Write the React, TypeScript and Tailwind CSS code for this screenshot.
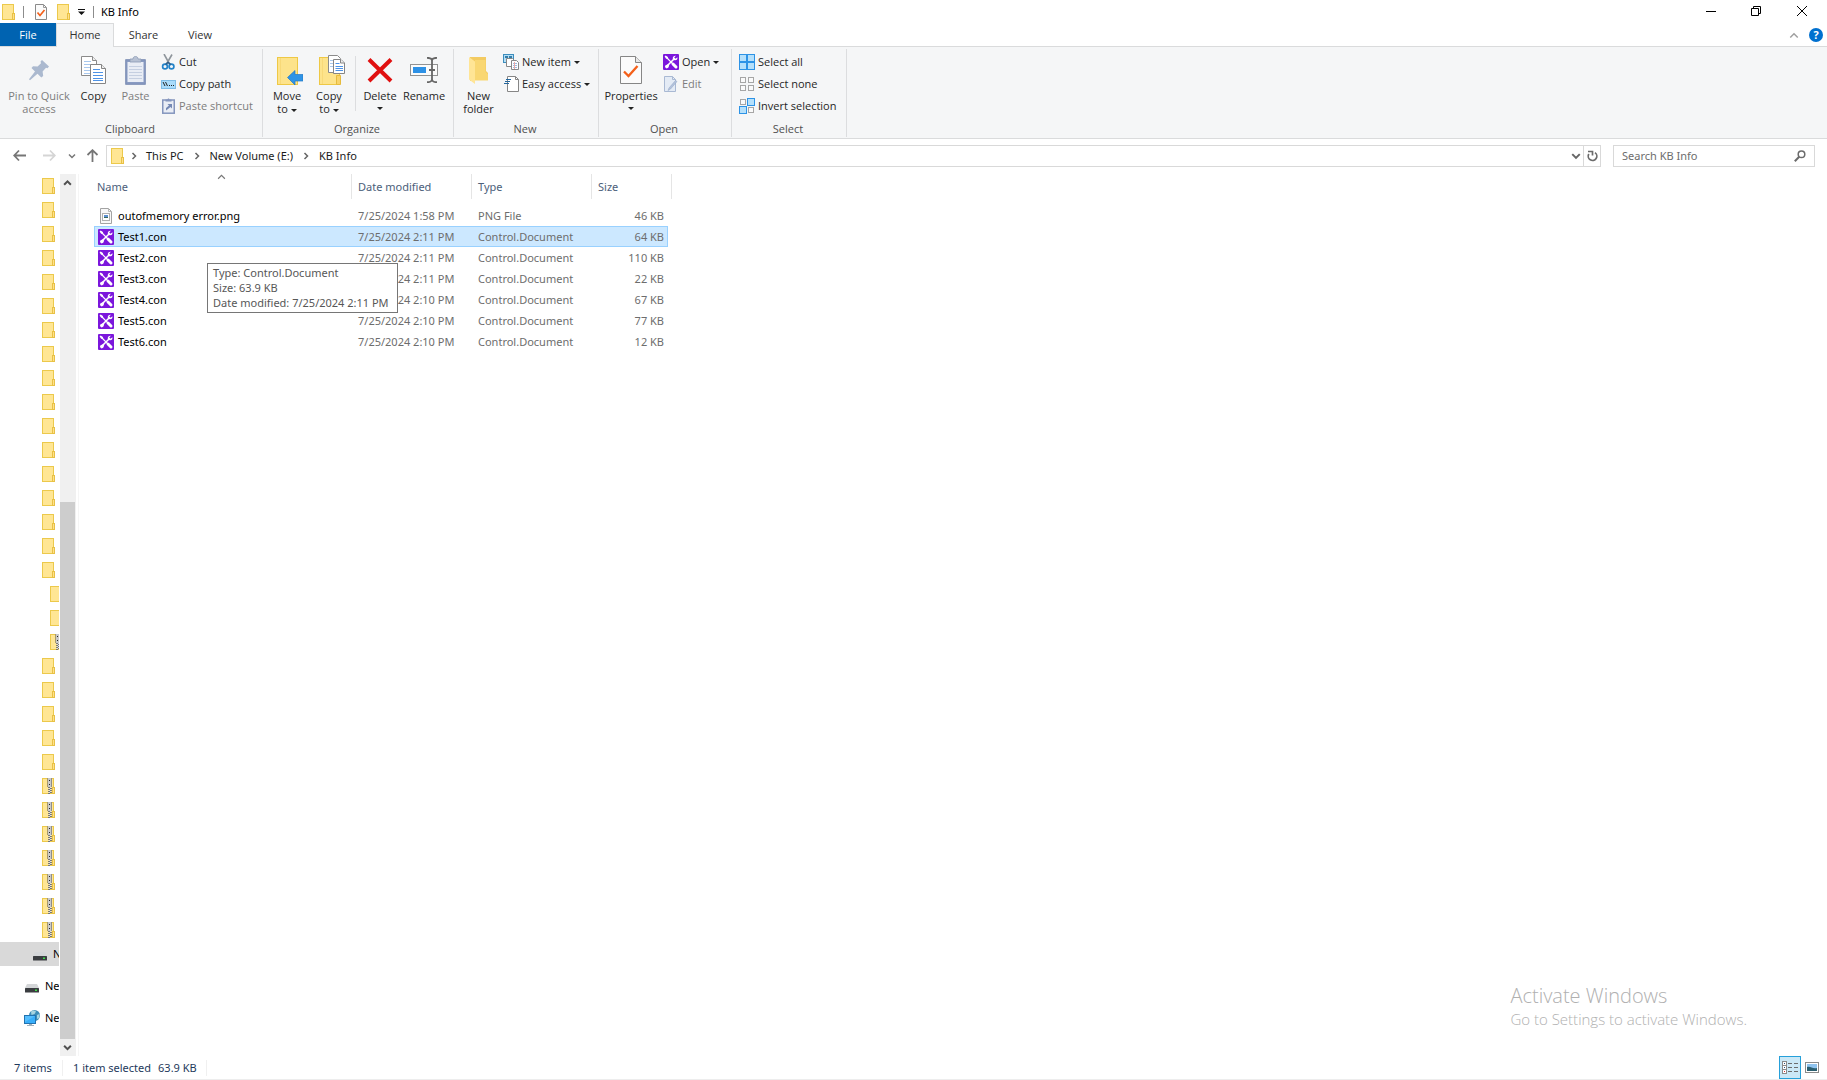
import type { ReactNode } from "react";

/* ---------- icons ---------- */

function FolderIcon({ zip = false }: { zip?: boolean }) {
  return (
    <svg width="13" height="16" viewBox="0 0 13 16" className="block shrink-0" shapeRendering="crispEdges">
      <rect x="0.5" y="0.5" width="11" height="15" fill="#ffe694" stroke="#ecc94b" />
      <rect x="10.5" y="9.5" width="2" height="6" fill="#ffe08a" stroke="#e8c145" />
      {zip && (
        <g>
          <rect x="5" y="0" width="5" height="9" fill="#c9c9c9" />
          <rect x="5" y="0" width="1" height="9" fill="#a89a6a" />
          <rect x="9" y="0" width="1" height="9" fill="#8d8d8d" />
          <rect x="7" y="2" width="1" height="1" fill="#222" />
          <rect x="7" y="6" width="1" height="1" fill="#222" />
          <path d="M6 9h2v1H6zM8 10h2v1H8zM6 11h2v1H6zM8 12h2v1H8zM6 13h2v1H6zM8 14h2v1H8zM6 15h2v1H6z" fill="#777" />
          <path d="M8 9h1v1H8zM7 10h1v1H7zM8 11h1v1H8zM7 12h1v1H7zM8 13h1v1H8zM7 14h1v1H7z" fill="#ddd" />
        </g>
      )}
    </svg>
  );
}

function ToolsIcon() {
  return (
    <svg width="16" height="16" viewBox="0 0 16 16" className="block shrink-0">
      <rect width="16" height="16" rx="1" fill="#7b16dc" />
      <path d="m4 4 5.500 5.500" stroke="#fff" strokeWidth="1.100" />
      <path d="m1.600 2.500 1-1 2.300 1.400.3 2.200-2.100-.3z" fill="#fff" />
      <path d="m10 10 3 3" stroke="#fff" strokeWidth="3" strokeLinecap="round" />
      <path d="m4 12 7-7" stroke="#fff" strokeWidth="1.600" />
      <path d="M12.900 1.700 11.200 3.400l1.400 1.400 1.800-1.600c.4 1.800-.7 3.200-2.500 3.100-1.500-.1-2.400-1.300-2.100-2.600.3-1.400 1.600-2.300 3.100-2z" fill="#fff" />
      <path d="m2.500 11.200 2.500-1 1.200 1.200-1 2.300-1.700.9-1.600-1.500z" fill="#fff" />
    </svg>
  );
}

function CheckPageIcon({ large = false }: { large?: boolean }) {
  return large ? (
    <svg width="22" height="28" viewBox="0 0 22 28" className="block">
      <path d="M.5.5h15l6 6v21H.5z" fill="#fbfbfb" stroke="#868686" />
      <path d="M15.5.5v6h6" fill="#e8e8e8" stroke="#868686" />
      <path d="m4 15.500 4.500 4.500 9-10" fill="none" stroke="#f4601a" strokeWidth="2.300" />
    </svg>
  ) : (
    <svg width="12" height="16" viewBox="0 0 12 16" className="block">
      <path d="M.5.5h8l3 3v12H.5z" fill="#fbfbfb" stroke="#8a8a8a" />
      <path d="M8.500.5v3h3" fill="none" stroke="#9a9a9a" />
      <path d="m2.500 8.500 2.500 3 4.500-5.500" fill="none" stroke="#f4601a" strokeWidth="1.700" />
    </svg>
  );
}

function PinIcon() {
  return (
    <svg width="22" height="22" viewBox="0 0 22 22" className="block">
      <path d="M14 1 21 7.500 19.500 9.200 18 8.700 14.600 12.500 15.200 17 13.300 18.600 9.500 14.800 2 21.200 1 20.300 7 12.500 3.500 9 5 7.200 9.600 7.600 13 4.200 12.500 2.500z" fill="#abb9cf" />
    </svg>
  );
}

function CopyIcon() {
  return (
    <svg width="25" height="28" viewBox="0 0 25 28" className="block">
      <path d="M.5.5h11l4 4v15H.5z" fill="#fff" stroke="#8b8b8b" />
      <path d="M11.500.5v4h4" fill="#eee" stroke="#8b8b8b" />
      <path d="M3 5.500h7M3 8.500h10M3 11.500h10M3 14.500h10M3 17.500h10" stroke="#a8c8ee" />
      <path d="M9.500 8.500h11l4 4v15h-15z" fill="#fff" stroke="#858585" />
      <path d="M20.500 8.500v4h4" fill="#eee" stroke="#858585" />
      <path d="M12 13.500h7M12 16.500h10M12 19.500h10M12 22.500h10M12 24.500h10" stroke="#4e93e6" />
    </svg>
  );
}

function PasteIcon() {
  return (
    <svg width="21" height="29" viewBox="0 0 21 29" className="block">
      <rect x=".75" y="3.750" width="19.500" height="24.500" fill="#899bc2" stroke="#7688b0" />
      <rect x="2.500" y="6" width="16" height="20" fill="#e9edf5" />
      <path d="M4 10.500h13M4 13.500h13M4 16.500h13M4 19.500h13M4 22.500h13" stroke="#c5cfe1" />
      <path d="M5 6V3h3c0-3.500 5-3.500 5 0h3v3z" fill="#b7c1d3" stroke="#8a99b5" strokeWidth=".8" />
    </svg>
  );
}

function CutIcon() {
  return (
    <svg width="14" height="16" viewBox="0 0 14 16" className="block">
      <path d="m3 0 5.500 10M11 .5 5.500 10" stroke="#8f969c" strokeWidth="1.600" />
      <circle cx="4" cy="12.500" r="2.400" fill="none" stroke="#2383c9" strokeWidth="1.700" />
      <circle cx="10.500" cy="12.500" r="2.400" fill="none" stroke="#2383c9" strokeWidth="1.700" />
      <path d="m4.500 10.500 2.500-2 3 2" fill="none" stroke="#2a5e8c" strokeWidth="1.500" />
    </svg>
  );
}

function CopyPathIcon() {
  return (
    <svg width="15" height="9" viewBox="0 0 15 9" className="block">
      <rect x=".5" y=".5" width="14" height="8" fill="#a9dcfb" stroke="#7fbde6" />
      <path d="m2 2 2 4M4.500 2l2 4" stroke="#222" />
      <path d="M8 5h1v1H8zM10 5h1v1h-1zM12 5h1v1h-1z" fill="#222" />
    </svg>
  );
}

function PasteShortcutIcon() {
  return (
    <svg width="13" height="16" viewBox="0 0 13 16" className="block">
      <rect x=".75" y="2" width="11.500" height="13.200" fill="#e9edf5" stroke="#8495bd" strokeWidth="1.500" />
      <path d="M3.500 3.500v-2h2c0-1.500 2-1.500 2 0h2v2z" fill="#8495bd" />
      <path d="M4 12.500V10l3-2.500L5.500 6H10v4.500L8.500 9 6 11z" fill="#7589b5" />
    </svg>
  );
}

function RibbonFolder({ children }: { children?: ReactNode }) {
  return (
    <svg width="32" height="30" viewBox="-5 0 32 30" className="block shrink-0">
      <rect x="1.500" y="2.500" width="20" height="27" fill="#fde38b" stroke="#eec845" />
      <path d="M4.500 3v26" stroke="#f8d978" />
      {children}
    </svg>
  );
}

function MoveToIcon() {
  return (
    <RibbonFolder>
      <path d="m11.500 22.500 7.500-7v4h8v6.500h-8v4z" fill="#2f94e6" stroke="#2379c4" strokeWidth=".7" />
    </RibbonFolder>
  );
}

function CopyToIcon() {
  return (
    <RibbonFolder>
      <path d="M18.500 20.500h4v9h-4z" fill="#f8d36a" stroke="#e6bb3d" />
      <path d="M10.500.5h9l3 3v14h-12z" fill="#fff" stroke="#8b8b8b" />
      <path d="M12 5.500h7M12 8.500h7M12 11.500h5" stroke="#a8c8ee" />
      <path d="M15.500 4.500h7.500l3.500 3.500v10.500H15.500z" fill="#fff" stroke="#858585" />
      <path d="M22.500 4.500v3.500h4" fill="#eee" stroke="#858585" />
      <path d="M17.500 8.500h4M17.500 11.500h7.500M17.500 13.500h7.500M17.500 15.500h7.500" stroke="#4e93e6" />
    </RibbonFolder>
  );
}

function DeleteIcon() {
  return (
    <svg width="26" height="26" viewBox="0 0 26 26" className="block">
      <path d="M2 2.500 24 24M24 2.500 2 24" stroke="#e01010" strokeWidth="4" />
    </svg>
  );
}

function RenameIcon() {
  return (
    <svg width="28" height="26" viewBox="0 0 28 26" className="block">
      <rect x=".5" y="7.500" width="27" height="11" fill="#fbfbfb" stroke="#929292" />
      <rect x="3" y="10" width="13" height="6" fill="#2d91e6" />
      <path d="M17 .8c3 0 4.800.7 5 2.700v19c-.2 2-2 2.700-5 2.700M27 .8c-3 0-4.800.7-5 2.700M22 22.500c.2 2 2 2.700 5 2.700M19 13h6" fill="none" stroke="#666" strokeWidth="1.800" />
    </svg>
  );
}

function NewFolderIcon() {
  return (
    <svg width="20" height="27" viewBox="0 0 20 27" className="block">
      <path d="M1 0h16v14l2 2v7H6L1 24z" fill="#f3cb62" />
      <path d="M6 3h10.500v12l2.500 2v6.500H6z" fill="#f9d773" />
      <path d="M0 0 6 4.500V27L0 22.500z" fill="#ffe596" />
    </svg>
  );
}

function NewItemIcon() {
  return (
    <svg width="16" height="16" viewBox="0 0 16 16" className="block">
      <rect x=".5" y=".5" width="10" height="8" fill="#b3def5" stroke="#3c8dbd" />
      <path d="M2 2h3v2H2zM6 2h3v2H6z" fill="#347da9" />
      <path d="M3.500 4.500h6l2 2v6h-8z" fill="#fff" stroke="#888" />
      <path d="M8.500 6.500h5l2 2v7h-7z" fill="#fff" stroke="#888" />
      <path d="M10 9.500h4M10 11.500h4M10 13.500h4" stroke="#9dbce0" />
      <path d="M11.500 8v7" stroke="#edaaa6" />
    </svg>
  );
}

function EasyAccessIcon() {
  return (
    <svg width="15" height="16" viewBox="0 0 15 16" className="block">
      <path d="M3.500.5h8l3 3v12h-11z" fill="#fff" stroke="#868686" />
      <path d="M11.500.5v3h3" fill="none" stroke="#868686" />
      <path d="M2 3.500h5M1 5.500h5M0 7.500h5" stroke="#25689e" strokeWidth="1.200" />
    </svg>
  );
}

function EditIcon() {
  return (
    <svg width="14" height="16" viewBox="0 0 14 16" className="block">
      <path d="M.5.5h8l3 3v12H.5z" fill="#e4ebf5" stroke="#a9b9d3" />
      <path d="M8.500.5v3h3" fill="none" stroke="#a9b9d3" />
      <path d="M13 5.500 6.500 13 4 14.500 5 12l6.500-7.500z" fill="#b4c3dc" stroke="#98abc9" strokeWidth=".6" />
    </svg>
  );
}

function GridIcon({ filled }: { filled: boolean[] }) {
  const spots = [[0, 0], [8, 0], [0, 8], [8, 8]];
  return (
    <svg width="16" height="16" viewBox="0 0 16 16" className="block" shapeRendering="crispEdges">
      {spots.map(([x, y], i) =>
        filled[i] ? (
          <rect key={i} x={x + 0.5} y={y + 0.5} width="7" height="7" fill="#b5e0fb" stroke="#2d93e6" />
        ) : (
          <rect key={i} x={x + 1.5} y={y + 1.5} width="5" height="5" fill="#fafafa" stroke="#a6a6a6" />
        ),
      )}
    </svg>
  );
}

function Caret() {
  return (
    <svg width="6" height="3" viewBox="0 0 6 3" className="inline-block shrink-0 align-middle">
      <path d="M0 0h6L3 3z" fill="#222" />
    </svg>
  );
}

function Chevron({ d, size = 8, color = "#666", weight = 1.5 }: { d: "up" | "down" | "right"; size?: number; color?: string; weight?: number }) {
  const paths = { up: "M1 6 4 3l3 3", down: "M1 2.500l3 3 3-3", right: "M2.500 1l3 3-3 3" };
  return (
    <svg width={size} height={size} viewBox="0 0 8 8" className="block shrink-0">
      <path d={paths[d]} fill="none" stroke={color} strokeWidth={weight} />
    </svg>
  );
}

function Arrow({ up = false, flip = false, color = "#767676" }: { up?: boolean; flip?: boolean; color?: string }) {
  return (
    <svg width="13" height="13" viewBox="0 0 13 13" className={up ? "block rotate-90" : flip ? "block rotate-180" : "block"}>
      <path d="M6 1.500 1.200 6.500 6 11.500M1.500 6.500H13" fill="none" stroke={color} strokeWidth="1.800" />
    </svg>
  );
}

function DriveIcon() {
  return (
    <svg width="14" height="9" viewBox="0 0 14 9" className="block shrink-0">
      <path d="M2 0h10l2 4H0z" fill="#d4d6d8" />
      <rect y="4" width="14" height="4.500" rx=".5" fill="#3a3d40" />
      <rect x="10" y="5.500" width="2" height="1.500" fill="#3fe04a" />
    </svg>
  );
}

function NetworkIcon() {
  return (
    <svg width="16" height="16" viewBox="0 0 16 16" className="block shrink-0">
      <circle cx="10.500" cy="5.500" r="5.500" fill="#3d8db8" />
      <path d="M7 1.500c2-1.500 4-1 5 0L10.500 4 7.500 5zM13 5l2.500-1v4L13 9z" fill="#a8d4e0" />
      <rect x=".5" y="5.500" width="11" height="8" fill="#38aefa" stroke="#2373b0" />
      <path d="M1 6h10L1 12z" fill="#6ac8ff" opacity=".6" />
      <path d="M5 14h3v1H5zM3 15h7v1H3z" fill="#9fb0bc" />
    </svg>
  );
}

function PngIcon() {
  return (
    <svg width="12" height="16" viewBox="0 0 12 16" className="mx-[2px] block shrink-0">
      <path d="M.5.5h8l3 3v12H.5z" fill="#f8f8f8" stroke="#a3a3a3" />
      <path d="M8.500.5v3h3" fill="none" stroke="#b5b5b5" />
      <rect x="2.500" y="5.500" width="7" height="7" fill="#fff" stroke="#b0b0b0" />
      <rect x="4" y="7" width="4" height="2" fill="#5b8fd0" />
      <rect x="4" y="9" width="4" height="1" fill="#396a5c" />
    </svg>
  );
}

/* ---------- ribbon parts ---------- */

function Big({ icon, lines, className, dim = false, caret = "none" }: { icon: ReactNode; lines: string[]; className: string; dim?: boolean; caret?: "none" | "inline" | "below" }) {
  return (
    <button type="button" className={`flex shrink-0 flex-col items-center pt-[5px] text-center leading-[13px] ${dim ? "text-[#7d7d7d]" : "text-[#262626]"} ${className}`}>
      <span className="flex h-8 items-center justify-center">{icon}</span>
      <span className="mt-[3px] block whitespace-nowrap">
        {lines.map((line, i) => (
          <span key={line} className="block">
            {line}
            {caret === "inline" && i === lines.length - 1 && <> <Caret /></>}
          </span>
        ))}
      </span>
      {caret === "below" && <span className="flex h-3 items-center"><Caret /></span>}
    </button>
  );
}

function Small({ icon, label, dim = false, caret = false }: { icon: ReactNode; label: string; dim?: boolean; caret?: boolean }) {
  return (
    <button type="button" className={`flex h-[22px] items-center gap-[3px] whitespace-nowrap ${dim ? "text-[#7d7d7d]" : "text-[#262626]"}`}>
      <span className="flex w-4 justify-center">{icon}</span>
      <span>{label}</span>
      {caret && <Caret />}
    </button>
  );
}

function Group({ label, className, children }: { label: string; className: string; children: ReactNode }) {
  return (
    <section aria-label={label} className={`mt-[2px] mb-[1px] flex shrink-0 flex-col border-r border-[#dcdddf] ${className}`}>
      <div className="flex flex-1 items-start">{children}</div>
      <div className="h-4 pr-[2px] text-center leading-4 text-[#505050]">{label}</div>
    </section>
  );
}

/* ---------- data ---------- */

const treeRows = [
  ...Array.from({ length: 17 }, () => ({ zip: false, deep: false })),
  { zip: false, deep: true },
  { zip: false, deep: true },
  { zip: true, deep: true },
  ...Array.from({ length: 5 }, () => ({ zip: false, deep: false })),
  ...Array.from({ length: 7 }, () => ({ zip: true, deep: false })),
];

const files = [
  { name: "outofmemory error.png", date: "7/25/2024 1:58 PM", type: "PNG File", size: "46 KB" },
  { name: "Test1.con", date: "7/25/2024 2:11 PM", type: "Control.Document", size: "64 KB" },
  { name: "Test2.con", date: "7/25/2024 2:11 PM", type: "Control.Document", size: "110 KB" },
  { name: "Test3.con", date: "7/25/2024 2:11 PM", type: "Control.Document", size: "22 KB" },
  { name: "Test4.con", date: "7/25/2024 2:10 PM", type: "Control.Document", size: "67 KB" },
  { name: "Test5.con", date: "7/25/2024 2:10 PM", type: "Control.Document", size: "77 KB" },
  { name: "Test6.con", date: "7/25/2024 2:10 PM", type: "Control.Document", size: "12 KB" },
];

/* ---------- page sections ---------- */

function TitleBar() {
  return (
    <header className="flex h-[23px] shrink-0 items-center">
      <div className="flex items-center pl-[2px]">
        <FolderIcon />
        <span className="ml-2 h-3 w-px bg-[#8c8c8c]" />
        <button type="button" aria-label="Properties" className="ml-[11px]"><CheckPageIcon /></button>
        <button type="button" aria-label="New folder" className="ml-[10px]"><FolderIcon /></button>
        <button type="button" aria-label="Customize toolbar" className="ml-2">
          <svg width="7" height="6" viewBox="0 0 7 6" className="block"><path d="M0 0h7v1H0zM0 2.500h7L3.500 6z" fill="#111" /></svg>
        </button>
        <span className="ml-2 h-3 w-px bg-[#8c8c8c]" />
      </div>
      <h1 className="ml-[7px] font-['Noto_Sans'] text-black">KB Info</h1>
      <div className="ml-auto flex h-full items-start">
        <button type="button" aria-label="Minimize" className="flex h-[21px] w-[45px] items-center justify-center">
          <svg width="10" height="10"><path d="M0 5.500h10" stroke="#000" /></svg>
        </button>
        <button type="button" aria-label="Restore" className="flex h-[21px] w-[46px] items-center justify-center">
          <svg width="10" height="10" fill="none" stroke="#000"><path d="M.5 2.500h7v7h-7zM2.500 2.500v-2h7v7h-2" /></svg>
        </button>
        <button type="button" aria-label="Close" className="flex h-[21px] w-[46px] items-center justify-center">
          <svg width="10" height="10" stroke="#000"><path d="m0 0 10 10M10 0 0 10" /></svg>
        </button>
        <span className="w-[2px]" />
      </div>
    </header>
  );
}

function Tabs() {
  return (
    <nav className="flex h-6 shrink-0 border-b border-[#dadbdc] text-[#333]">
      <button type="button" className="h-[23px] w-14 bg-[#0063b1] text-white">File</button>
      <button type="button" className="h-6 w-[58px] border-x border-t border-[#dadbdc] bg-[#f5f6f7] pb-[2px]">Home</button>
      <button type="button" className="h-[23px] w-[59px]">Share</button>
      <button type="button" className="h-[23px] w-[54px]">View</button>
      <div className="ml-auto flex items-center gap-[10px] pr-1">
        <button type="button" aria-label="Minimize the ribbon"><Chevron d="up" size={10} color="#a0a0a0" weight={1.2} /></button>
        <button type="button" aria-label="Help" className="flex h-[14px] w-[14px] items-center justify-center rounded-full bg-[#0070cf] font-bold text-white">?</button>
      </div>
    </nav>
  );
}

function Ribbon() {
  return (
    <div className="flex h-[92px] shrink-0 overflow-hidden border-b border-[#dadbdc] bg-[#f5f6f7]">
      <Group label="Clipboard" className="w-[263px]">
        <Big className="ml-1 w-[70px]" icon={<PinIcon />} lines={["Pin to Quick", "access"]} dim />
        <Big className="w-[39px]" icon={<CopyIcon />} lines={["Copy"]} />
        <Big className="w-[45px]" icon={<PasteIcon />} lines={["Paste"]} dim />
        <div className="ml-[2px] pt-[2px]">
          <Small icon={<CutIcon />} label="Cut" />
          <Small icon={<CopyPathIcon />} label="Copy path" />
          <Small icon={<PasteShortcutIcon />} label="Paste shortcut" dim />
        </div>
      </Group>
      <Group label="Organize" className="w-[191px]">
        <Big className="ml-[3px] w-[42px]" icon={<MoveToIcon />} lines={["Move", "to"]} caret="inline" />
        <Big className="w-[42px]" icon={<CopyToIcon />} lines={["Copy", "to"]} caret="inline" />
        <span className="mt-[7px] ml-[5px] h-[55px] w-px bg-[#dcdddf]" />
        <Big className="ml-[3px] w-[42px]" icon={<DeleteIcon />} lines={["Delete"]} caret="below" />
        <Big className="w-[46px]" icon={<RenameIcon />} lines={["Rename"]} />
      </Group>
      <Group label="New" className="w-[145px]">
        <Big className="ml-[3px] w-[43px]" icon={<NewFolderIcon />} lines={["New", "folder"]} />
        <div className="ml-[3px] pt-[2px]">
          <Small icon={<NewItemIcon />} label="New item" caret />
          <Small icon={<EasyAccessIcon />} label="Easy access" caret />
        </div>
      </Group>
      <Group label="Open" className="w-[133px]">
        <Big className="ml-[3px] w-[58px]" icon={<CheckPageIcon large />} lines={["Properties"]} caret="below" />
        <div className="ml-[3px] pt-[2px]">
          <Small icon={<ToolsIcon />} label="Open" caret />
          <Small icon={<EditIcon />} label="Edit" dim />
        </div>
      </Group>
      <Group label="Select" className="w-[115px]">
        <div className="ml-[7px] pt-[2px]">
          <Small icon={<GridIcon filled={[true, true, true, true]} />} label="Select all" />
          <Small icon={<GridIcon filled={[false, false, false, false]} />} label="Select none" />
          <Small icon={<GridIcon filled={[false, true, true, false]} />} label="Invert selection" />
        </div>
      </Group>
    </div>
  );
}

function AddressBar() {
  return (
    <div className="flex h-[35px] shrink-0 items-center pr-3 pb-[2px] font-['Noto_Sans']">
      <button type="button" aria-label="Back" className="ml-[13px]"><Arrow /></button>
      <button type="button" aria-label="Forward" className="ml-[17px]"><Arrow flip color="#d5d5d5" /></button>
      <button type="button" aria-label="Recent locations" className="ml-[12px]"><Chevron d="down" color="#777" /></button>
      <button type="button" aria-label="Up" className="ml-[10px]"><Arrow up /></button>
      <div className="ml-[7px] flex h-[22px] min-w-0 flex-1 items-center border border-[#d9d9d9] text-[#1a1a1a]">
        <span className="ml-1"><FolderIcon /></span>
        <span className="ml-[6px]"><Chevron d="right" /></span>
        <a href="#this-pc" className="ml-2 whitespace-nowrap">This PC</a>
        <span className="ml-[9px]"><Chevron d="right" /></span>
        <a href="#volume-e" className="ml-[9px] whitespace-nowrap">New Volume (E:)</a>
        <span className="ml-[9px]"><Chevron d="right" /></span>
        <a href="#kb-info" className="ml-[9px] whitespace-nowrap">KB Info</a>
        <button type="button" aria-label="Previous locations" className="mr-[2px] ml-auto"><Chevron d="down" size={10} weight={1.6} /></button>
        <button type="button" aria-label="Refresh" className="flex h-full w-[17px] items-center justify-center border-l border-[#d9d9d9]">
          <svg width="11" height="12" viewBox="0 0 11 12"><path d="M1.800 4A4.300 4.300 0 1 0 8 2.600M1 1.500h4.500v4" fill="none" stroke="#6b6b6b" strokeWidth="1.700" /></svg>
        </button>
      </div>
      <div className="ml-3 flex h-[22px] w-[202px] items-center border border-[#d9d9d9]">
        <input type="search" aria-label="Search KB Info" placeholder="Search KB Info" className="min-w-0 flex-1 bg-transparent pl-2 outline-none placeholder:text-[#6d6d6d]" />
        <svg width="12" height="12" viewBox="0 0 12 12" className="mr-2"><circle cx="7.500" cy="4.300" r="3.300" fill="none" stroke="#6b6b6b" strokeWidth="1.500" /><path d="M5.200 6.800.8 11.200" stroke="#6b6b6b" strokeWidth="2" /></svg>
      </div>
    </div>
  );
}

function NavigationPane() {
  return (
    <aside className="flex w-[79px] shrink-0 border-r border-[#f5f5f5] font-['Noto_Sans']">
      <div className="w-[59px] overflow-hidden text-black">
        <ul>
          {treeRows.map((row, i) => (
            <li key={i} className={`flex h-6 items-center ${row.deep ? "pl-[50px]" : "pl-[42px]"}`}>
              <FolderIcon zip={row.zip} />
            </li>
          ))}
          <li className="flex h-6 items-center gap-[6px] bg-[#d9d9d9] pl-[33px] whitespace-nowrap"><span className="pt-[5px]"><DriveIcon /></span>New Volume (E:)</li>
          <li className="mt-2 flex h-6 items-center gap-[6px] pl-[25px] whitespace-nowrap"><span className="pt-[5px]"><DriveIcon /></span>New Volume (E:)</li>
          <li className="mt-2 flex h-6 items-center gap-[5px] pl-6"><NetworkIcon />Network</li>
        </ul>
      </div>
      <div className="ml-px flex w-4 flex-col bg-[#f0f0f0]">
        <button type="button" aria-label="Scroll up" className="flex h-[17px] w-[15px] items-center justify-center"><Chevron d="up" size={9} color="#505050" weight={1.8} /></button>
        <span className="flex-[311]" />
        <span className="w-[15px] flex-[537] bg-[#cdcdcd]" />
        <button type="button" aria-label="Scroll down" className="flex h-[17px] w-[15px] items-center justify-center"><Chevron d="down" size={9} color="#505050" weight={1.8} /></button>
      </div>
    </aside>
  );
}

function Watermark() {
  return (
    <div className="absolute right-20 bottom-[27px] font-['Open_Sans'] font-light whitespace-nowrap text-[#b0b0b0]">
      <p className="text-[20px] leading-[26px]">Activate Windows</p>
      <p className="text-[15px] leading-5">Go to Settings to activate Windows.</p>
    </div>
  );
}

function FileList() {
  return (
    <main className="relative min-w-0 flex-1 pl-[15px] font-['Noto_Sans']">
      <table className="w-[578px] table-fixed border-separate border-spacing-0 text-left">
        <thead>
          <tr className="h-[25px] text-[#4c607a]">
            <th className="relative w-[258px] border-r border-[#e5e5e5] pl-[3px] font-normal">
              Name
              <span className="absolute -top-[2px] left-[123px]"><Chevron d="up" size={9} color="#777" weight={1} /></span>
            </th>
            <th className="w-[120px] border-r border-[#e5e5e5] pl-[6px] font-normal">Date modified</th>
            <th className="w-[120px] border-r border-[#e5e5e5] pl-[6px] font-normal">Type</th>
            <th className="w-20 border-r border-[#e5e5e5] pl-[6px] font-normal">Size</th>
          </tr>
        </thead>
        <tbody className="text-[#6d6d6d]">
          <tr aria-hidden="true" className="h-[6px]"><td colSpan={4} /></tr>
          {files.map((f, i) => {
            const sel = i === 1;
            const cell = sel ? "h-[21px] border-y border-[#99d1ff] bg-[#cce8ff] p-0" : "h-[21px] border-y border-transparent p-0";
            return (
              <tr key={f.name} aria-selected={sel}>
                <td className={`${cell} ${sel ? "border-l" : ""}`}>
                  <div className={`flex items-center gap-1 whitespace-nowrap text-black ${sel ? "pl-[3px]" : "pl-1"}`}>
                    {i === 0 ? <PngIcon /> : <ToolsIcon />}
                    {f.name}
                  </div>
                </td>
                <td className={cell}><div className="pl-[6px] whitespace-nowrap">{f.date}</div></td>
                <td className={cell}><div className="pl-[6px] whitespace-nowrap">{f.type}</div></td>
                <td className="h-[21px] p-0">
                  <div className={`mr-1 flex h-[21px] items-center justify-end border-y ${sel ? "border-r border-[#99d1ff] bg-[#cce8ff] pr-[3px]" : "border-transparent pr-1"}`}>{f.size}</div>
                </td>
              </tr>
            );
          })}
        </tbody>
      </table>
      <div role="tooltip" className="absolute top-[89px] left-[128px] w-[191px] border border-[#767676] bg-white px-[5px] pt-px pb-[2px] leading-[15px] whitespace-nowrap text-[#575757]">
        <p>Type: Control.Document</p>
        <p>Size: 63.9 KB</p>
        <p>Date modified: 7/25/2024 2:11 PM</p>
      </div>
      <Watermark />
    </main>
  );
}

function StatusBar() {
  return (
    <footer className="flex h-6 shrink-0 items-center border-b border-[#ededed] pr-2 font-['Noto_Sans'] text-[#1e395b]">
      <span className="w-[63px] border-r border-[#f0f0f0] pl-[14px]">7 items</span>
      <span className="flex w-36 gap-[7px] border-r border-[#f0f0f0] pl-[10px] whitespace-nowrap"><span>1 item selected</span><span>63.9 KB</span></span>
      <button type="button" aria-label="Details view" className="ml-auto flex h-[23px] w-[22px] items-center justify-center border border-[#26a0da] bg-[#cbe8f6]">
        <svg width="16" height="13" viewBox="0 0 16 13" shapeRendering="crispEdges">
          <path d="M.5.5h4v12h-4zM.5 4.500h4M.5 8.500h4" fill="#fff" stroke="#8a8a8a" />
          <path d="M6 2.500h4M12 2.500h4M6 6.500h4M12 6.500h4M6 10.500h4M12 10.500h4" stroke="#6d6d6d" />
          <path d="M2 2h1v1H2zM2 6h1v1H2z" fill="#26567f" /><path d="M2 10h1v1H2z" fill="#d33" />
        </svg>
      </button>
      <button type="button" aria-label="Large icons view" className="ml-1">
        <svg width="14" height="11" viewBox="0 0 14 11" className="block"><rect x=".5" y=".5" width="13" height="10" fill="#fff" stroke="#8a8a8a" /><rect x="2" y="2" width="10" height="7" fill="#8fc3ee" /><path d="M2 5c4-1 5 2 10 1v3H2z" fill="#2b5f70" /></svg>
      </button>
    </footer>
  );
}

export default function App() {
  return (
    <div className="flex h-screen flex-col overflow-hidden bg-white font-['Open_Sans','Noto_Sans',sans-serif] text-[11px] leading-4">
      <TitleBar />
      <Tabs />
      <Ribbon />
      <AddressBar />
      <div className="flex min-h-0 flex-1">
        <NavigationPane />
        <FileList />
      </div>
      <StatusBar />
    </div>
  );
}
